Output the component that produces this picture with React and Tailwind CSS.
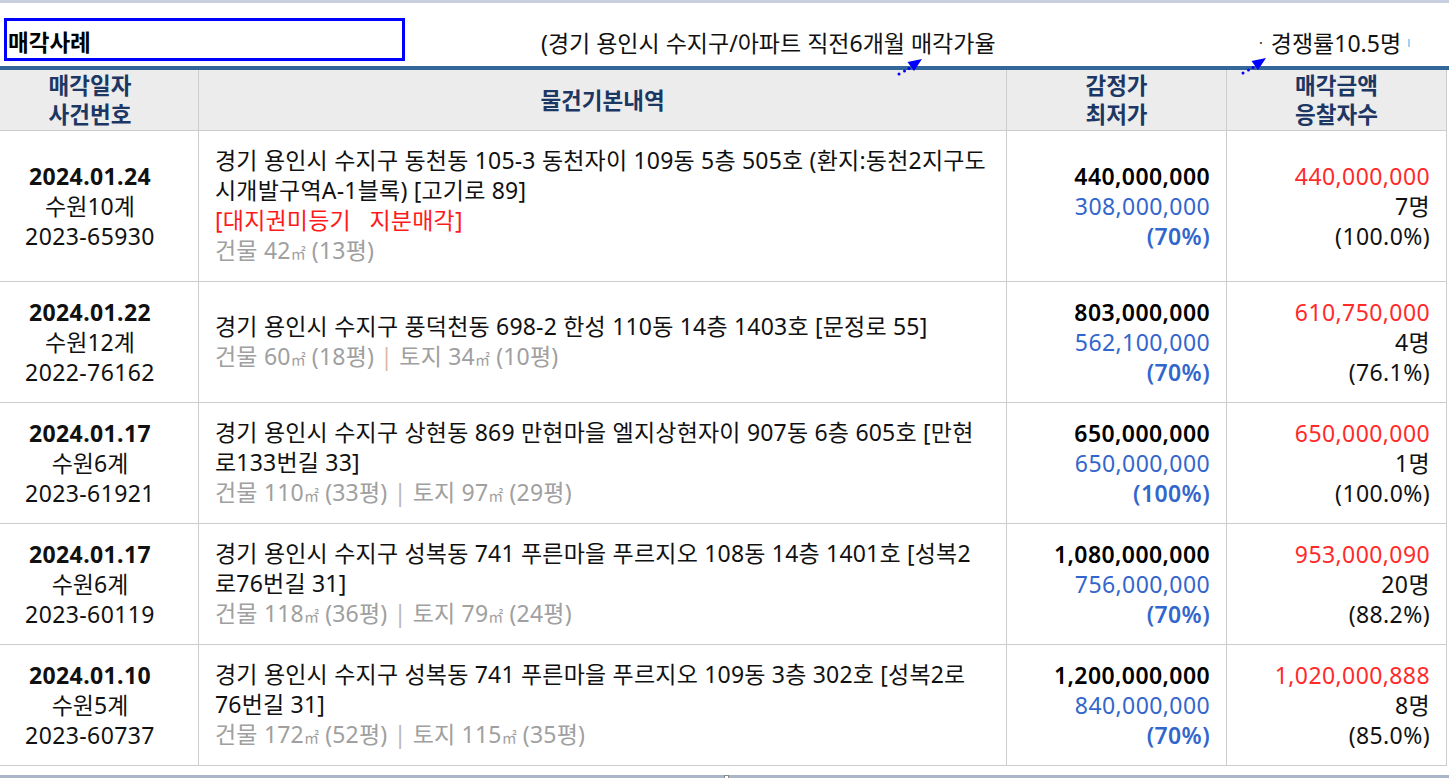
import React from "react";

const rows = [
  {
    date: "2024.01.24",
    court: "수원10계",
    no: "2023-65930",
    addr: ["경기 용인시 수지구 동천동 105-3 동천자이 109동 5층 505호 (환지:동천2지구도", "시개발구역A-1블록) [고기로 89]"],
    tag: "[대지권미등기\u00a0\u00a0\u00a0지분매각]",
    area: ["건물 42㎡ (13평)"],
    sep: "",
    appr: "440,000,000",
    min: "308,000,000",
    minPct: "(70%)",
    sold: "440,000,000",
    bidders: "7명",
    soldPct: "(100.0%)",
    tall: true,
  },
  {
    date: "2024.01.22",
    court: "수원12계",
    no: "2022-76162",
    addr: ["경기 용인시 수지구 풍덕천동 698-2 한성 110동 14층 1403호 [문정로 55]"],
    area: ["건물 60㎡ (18평)", "토지 34㎡ (10평)"],
    sep: "text-[#e0b8a8]",
    appr: "803,000,000",
    min: "562,100,000",
    minPct: "(70%)",
    sold: "610,750,000",
    bidders: "4명",
    soldPct: "(76.1%)",
  },
  {
    date: "2024.01.17",
    court: "수원6계",
    no: "2023-61921",
    addr: ["경기 용인시 수지구 상현동 869 만현마을 엘지상현자이 907동 6층 605호 [만현", "로133번길 33]"],
    area: ["건물 110㎡ (33평)", "토지 97㎡ (29평)"],
    sep: "text-[#b8b8b8]",
    appr: "650,000,000",
    min: "650,000,000",
    minPct: "(100%)",
    sold: "650,000,000",
    bidders: "1명",
    soldPct: "(100.0%)",
  },
  {
    date: "2024.01.17",
    court: "수원6계",
    no: "2023-60119",
    addr: ["경기 용인시 수지구 성복동 741 푸른마을 푸르지오 108동 14층 1401호 [성복2", "로76번길 31]"],
    area: ["건물 118㎡ (36평)", "토지 79㎡ (24평)"],
    sep: "text-[#b8b8b8]",
    appr: "1,080,000,000",
    min: "756,000,000",
    minPct: "(70%)",
    sold: "953,000,090",
    bidders: "20명",
    soldPct: "(88.2%)",
  },
  {
    date: "2024.01.10",
    court: "수원5계",
    no: "2023-60737",
    addr: ["경기 용인시 수지구 성복동 741 푸른마을 푸르지오 109동 3층 302호 [성복2로", "76번길 31]"],
    area: ["건물 172㎡ (52평)", "토지 115㎡ (35평)"],
    sep: "text-[#b8b8b8]",
    appr: "1,200,000,000",
    min: "840,000,000",
    minPct: "(70%)",
    sold: "1,020,000,888",
    bidders: "8명",
    soldPct: "(85.0%)",
  },
];

function Area({ text }) {
  const [a, b] = text.split("㎡");
  return (
    <>
      {a}
      <span className="text-[15px] tracking-normal">㎡</span>
      {b}
    </>
  );
}

function Arrow() {
  return (
    <svg width="30" height="20" viewBox="0 0 30 20">
      <circle cx="3" cy="17" r="1.5" fill="#0000ff" />
      <circle cx="8.5" cy="14" r="1.5" fill="#0000ff" />
      <circle cx="13" cy="11.5" r="1.5" fill="#0000ff" />
      <polygon points="26,2 11.5,5 18,14" fill="#0000ff" />
    </svg>
  );
}

const cell = "border-r border-b border-[#cccccc]";

export default function App() {
  return (
    <div className="w-[1449px] h-[778px] bg-white overflow-hidden font-['Noto_Sans','Noto_Sans_CJK_KR',sans-serif] text-[#111111] relative">
      <div className="h-[3px] bg-[#c8d0e0]" />
      {/* title row */}
      <div className="relative h-[63px] flex items-start">
        <div className="ml-[4px] mt-[15px] w-[401px] h-[43px] border-[3px] border-[#0000ff] flex items-center pl-[1px] pt-[6px]">
          <span className="text-[22.5px] font-bold leading-[30px] text-black">매각사례</span>
        </div>
        <div className="ml-[136px] mt-[25px] w-[718px] text-[23px] leading-[30px] whitespace-nowrap">
          (경기 용인시 수지구/아파트 직전6개월 매각가율
        </div>
        <div className="mt-[25px] flex items-center text-[23px] leading-[30px] whitespace-nowrap">
          <span className="text-[14px] mr-[8px]">·</span>
          <span>경쟁률10.5명</span>
          <span className="ml-[7px] w-[2px] h-[8px] bg-[#a8d0f0]" />
        </div>
        <div className="absolute left-[896px] top-[54px]">
          <Arrow />
        </div>
        <div className="absolute left-[1240px] top-[53px]">
          <Arrow />
        </div>
      </div>
      <div className="h-[4px] bg-[#336699]" />
      {/* table */}
      <div className="grid grid-cols-[199px_808px_220px_220px] w-[1447px]">
        {[
          ["매각일자", "사건번호"],
          ["물건기본내역"],
          ["감정가", "최저가"],
          ["매각금액", "응찰자수"],
        ].map((h, i) => (
          <div
            key={i}
            className={`${cell} bg-[#ececec] h-[61px] flex flex-col items-center justify-center text-[22.5px] font-bold leading-[29px] text-[#1c3763] ${i === 0 ? "pr-[18px]" : ""}`}
          >
            {h.map((t) => (
              <div key={t}>{t}</div>
            ))}
          </div>
        ))}
        {rows.map((r, i) => (
          <React.Fragment key={i}>
            <div className={`${cell} ${r.tall ? "h-[151px]" : "h-[121px]"} pr-[18px] flex flex-col items-center justify-center text-[23px] leading-[30px]`}>
              <div className="font-bold tracking-[0.4px]">{r.date}</div>
              <div>{r.court}</div>
              <div className="tracking-[0.4px]">{r.no}</div>
            </div>
            <div className={`${cell} flex flex-col justify-center pl-[16px] text-[23px] leading-[30px] tracking-[0.2px] whitespace-nowrap`}>
              {r.addr.map((a) => (
                <div key={a}>{a}</div>
              ))}
              {r.tag && <div className="text-[#ff1a1a]">{r.tag}</div>}
              <div className="text-[#a0a0a0]">
                <Area text={r.area[0]} />
                {r.area[1] && (
                  <>
                    {" "}
                    <span className={r.sep}>|</span> <Area text={r.area[1]} />
                  </>
                )}
              </div>
            </div>
            <div className={`${cell} flex flex-col items-end justify-center pr-[16px] text-[23px] leading-[30px] tracking-[0.4px]`}>
              <div className="font-semibold text-black">{r.appr}</div>
              <div className="text-[#3366cc]">{r.min}</div>
              <div className="text-[#3366cc] font-semibold">{r.minPct}</div>
            </div>
            <div className={`${cell} flex flex-col items-end justify-center pr-[16px] text-[23px] leading-[30px] tracking-[0.4px]`}>
              <div className="text-[#ff2a2a]">{r.sold}</div>
              <div>{r.bidders}</div>
              <div>{r.soldPct}</div>
            </div>
          </React.Fragment>
        ))}
      </div>
      <div className="relative mt-[9px] h-[4px] bg-[#aab5c9]">
        <div className="absolute left-[724px] top-0 w-[5px] h-[4px] bg-white border border-[#888888]" />
      </div>
    </div>
  );
}
